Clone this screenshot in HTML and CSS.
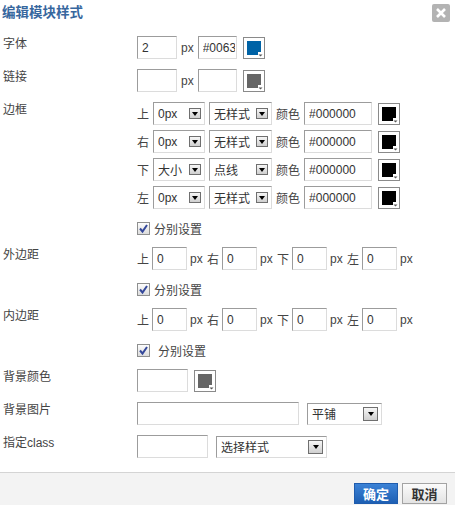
FILE: index.html
```html
<!DOCTYPE html>
<html>
<head>
  <title>编辑模块样式</title>
  <meta charset="UTF-8">
  <link rel="stylesheet" href="styles.css">
</head>
<body>
  <div class="dialog">
    <div class="dlg-head">
      <span class="dlg-title">编辑模块样式</span>
      <span class="dlg-close"><svg width="10" height="10" viewBox="0 0 10 10"><path d="M1 1L9 9M9 1L1 9" stroke="#fff" stroke-width="2.6"/></svg></span>
    </div>

    <div class="dlg-body">
      <div class="form-row">
        <label class="form-label">字体</label>
        <div class="form-fields">
          <div class="line">
            <input type="text" class="ipt ipt-num" value="2">
            <span class="unit">px</span>
            <input type="text" class="ipt ipt-code" value="#0063a6">
            <span class="swatch"><svg width="20" height="20" viewBox="0 0 20 20"><path d="M3 3H17V14H14V17H3Z" fill="#0063a6"/><path d="M14.5 16.5h4l-2 2z" fill="#555"/></svg></span>
          </div>
        </div>
      </div>

      <div class="form-row">
        <label class="form-label">链接</label>
        <div class="form-fields">
          <div class="line">
            <input type="text" class="ipt ipt-num" value="">
            <span class="unit">px</span>
            <input type="text" class="ipt ipt-code" value="">
            <span class="swatch"><svg width="20" height="20" viewBox="0 0 20 20"><path d="M3 3H17V14H14V17H3Z" fill="#666"/><path d="M14.5 16.5h4l-2 2z" fill="#555"/></svg></span>
          </div>
        </div>
      </div>

      <div class="form-row">
        <label class="form-label">边框</label>
        <div class="form-fields">
          <div class="line">
            <span class="side">上</span>
            <div class="sel sel-size"><span>0px</span><span class="sel-btn"></span></div>
            <div class="sel sel-style"><span>无样式</span><span class="sel-btn"></span></div>
            <span class="side">颜色</span>
            <input type="text" class="ipt ipt-color" value="#000000">
            <span class="swatch"><svg width="20" height="20" viewBox="0 0 20 20"><path d="M3 3H17V14H14V17H3Z" fill="#000"/><path d="M14.5 16.5h4l-2 2z" fill="#555"/></svg></span>
          </div>
          <div class="line">
            <span class="side">右</span>
            <div class="sel sel-size"><span>0px</span><span class="sel-btn"></span></div>
            <div class="sel sel-style"><span>无样式</span><span class="sel-btn"></span></div>
            <span class="side">颜色</span>
            <input type="text" class="ipt ipt-color" value="#000000">
            <span class="swatch"><svg width="20" height="20" viewBox="0 0 20 20"><path d="M3 3H17V14H14V17H3Z" fill="#000"/><path d="M14.5 16.5h4l-2 2z" fill="#555"/></svg></span>
          </div>
          <div class="line">
            <span class="side">下</span>
            <div class="sel sel-size"><span>大小</span><span class="sel-btn"></span></div>
            <div class="sel sel-style"><span>点线</span><span class="sel-btn"></span></div>
            <span class="side">颜色</span>
            <input type="text" class="ipt ipt-color" value="#000000">
            <span class="swatch"><svg width="20" height="20" viewBox="0 0 20 20"><path d="M3 3H17V14H14V17H3Z" fill="#000"/><path d="M14.5 16.5h4l-2 2z" fill="#555"/></svg></span>
          </div>
          <div class="line">
            <span class="side">左</span>
            <div class="sel sel-size"><span>0px</span><span class="sel-btn"></span></div>
            <div class="sel sel-style"><span>无样式</span><span class="sel-btn"></span></div>
            <span class="side">颜色</span>
            <input type="text" class="ipt ipt-color" value="#000000">
            <span class="swatch"><svg width="20" height="20" viewBox="0 0 20 20"><path d="M3 3H17V14H14V17H3Z" fill="#000"/><path d="M14.5 16.5h4l-2 2z" fill="#555"/></svg></span>
          </div>
        </div>
      </div>

      <div class="form-row check-row">
        <span class="form-label"></span>
        <label class="check"><span class="ck"><svg width="11" height="11" viewBox="0 0 11 11"><path d="M2 5.5L4.5 8.5L9 2" fill="none" stroke="#34489a" stroke-width="2"/></svg></span>分别设置</label>
      </div>

      <div class="form-row">
        <label class="form-label">外边距</label>
        <div class="form-fields">
          <div class="line spacing">
            <span class="side">上</span><input type="text" class="ipt ipt-box" value="0"><span class="unit">px</span>
            <span class="side">右</span><input type="text" class="ipt ipt-box" value="0"><span class="unit">px</span>
            <span class="side">下</span><input type="text" class="ipt ipt-box" value="0"><span class="unit">px</span>
            <span class="side">左</span><input type="text" class="ipt ipt-box" value="0"><span class="unit">px</span>
          </div>
        </div>
      </div>

      <div class="form-row check-row">
        <span class="form-label"></span>
        <label class="check"><span class="ck"><svg width="11" height="11" viewBox="0 0 11 11"><path d="M2 5.5L4.5 8.5L9 2" fill="none" stroke="#34489a" stroke-width="2"/></svg></span>分别设置</label>
      </div>

      <div class="form-row">
        <label class="form-label">内边距</label>
        <div class="form-fields">
          <div class="line spacing">
            <span class="side">上</span><input type="text" class="ipt ipt-box" value="0"><span class="unit">px</span>
            <span class="side">右</span><input type="text" class="ipt ipt-box" value="0"><span class="unit">px</span>
            <span class="side">下</span><input type="text" class="ipt ipt-box" value="0"><span class="unit">px</span>
            <span class="side">左</span><input type="text" class="ipt ipt-box" value="0"><span class="unit">px</span>
          </div>
        </div>
      </div>

      <div class="form-row check-row">
        <span class="form-label"></span>
        <label class="check check-wide"><span class="ck"><svg width="11" height="11" viewBox="0 0 11 11"><path d="M2 5.5L4.5 8.5L9 2" fill="none" stroke="#34489a" stroke-width="2"/></svg></span>分别设置</label>
      </div>

      <div class="form-row">
        <label class="form-label">背景颜色</label>
        <div class="form-fields">
          <div class="line">
            <input type="text" class="ipt ipt-bg" value="">
            <span class="swatch swatch-far"><svg width="20" height="20" viewBox="0 0 20 20"><path d="M3 3H17V14H14V17H3Z" fill="#666"/><path d="M14.5 16.5h4l-2 2z" fill="#555"/></svg></span>
          </div>
        </div>
      </div>

      <div class="form-row">
        <label class="form-label">背景图片</label>
        <div class="form-fields">
          <div class="line wide-gap">
            <input type="text" class="ipt ipt-url" value="">
            <div class="sel sel-repeat"><span>平铺</span><span class="sel-btn sel-btn-lg"></span></div>
          </div>
        </div>
      </div>

      <div class="form-row">
        <label class="form-label">指定class</label>
        <div class="form-fields">
          <div class="line wide-gap">
            <input type="text" class="ipt ipt-class" value="">
            <div class="sel sel-class"><span>选择样式</span><span class="sel-btn sel-btn-lg"></span></div>
          </div>
        </div>
      </div>
    </div>

    <div class="dlg-foot">
      <button class="btn btn-primary">确定</button>
      <button class="btn">取消</button>
    </div>
  </div>
</body>
</html>
```

FILE: styles.css
```css
html, body {
  margin: 0;
  padding: 0;
  background: #fff;
}
body {
  font-family: "Liberation Sans", "Noto Sans CJK SC", sans-serif;
  font-size: 12px;
  color: #444;
  overflow: hidden;
}
.dialog {
  width: 455px;
  height: 505px;
  display: flex;
  flex-direction: column;
}

/* header */
.dlg-head {
  height: 36px;
  display: flex;
  justify-content: space-between;
  align-items: flex-start;
  padding: 0 5px 0 2px;
  flex: none;
}
.dlg-title {
  font-size: 13.5px;
  font-weight: bold;
  line-height: 26px;
  color: #37679e;
}
.dlg-close {
  margin-top: 4px;
  width: 18px;
  height: 18px;
  background: #b3b3b3;
  border-radius: 2px;
  display: flex;
  align-items: center;
  justify-content: center;
}

/* form */
.dlg-body {
  display: flex;
  flex-direction: column;
  gap: 10px;
  padding-bottom: 14px;
  flex: 1;
}
.form-row {
  display: flex;
}
.form-label {
  width: 137px;
  padding-left: 3px;
  box-sizing: border-box;
  line-height: 17px;
  flex: none;
  color: #444;
}
.form-fields {
  display: flex;
  flex-direction: column;
  gap: 5px;
}
.line {
  display: flex;
  align-items: center;
  gap: 4px;
  height: 23px;
}
.line.spacing {
  gap: 3px;
}
.line.spacing .unit {
  width: 14px;
}
.line.wide-gap {
  gap: 8px;
}
.side, .unit {
  color: #444;
  white-space: nowrap;
}

.ipt {
  height: 23px;
  box-sizing: border-box;
  border: 1px solid;
  border-color: #9c9c9c #dcdcdc #dcdcdc #9c9c9c;
  padding: 0 1px 0 4px;
  margin: 0;
  font-family: "Liberation Sans", "Noto Sans CJK SC", sans-serif;
  font-size: 12px;
  color: #333;
  background: #fff;
  outline: none;
}
.ipt-num { width: 40px; }
.ipt-code { width: 39px; }
.ipt-color { width: 68px; }
.ipt-box { width: 35px; }
.ipt-bg { width: 51px; }
.ipt-url { width: 162px; }
.ipt-class { width: 71px; }

/* fake select box */
.sel {
  height: 23px;
  box-sizing: border-box;
  display: flex;
  align-items: center;
  justify-content: space-between;
  border: 1px solid;
  border-color: #9c9c9c #dcdcdc #dcdcdc #9c9c9c;
  padding: 0 3px 0 4px;
  background: #fff;
  color: #333;
}
.sel-size { width: 52px; }
.sel-style { width: 63px; }
.sel-repeat { width: 75px; height: 22px; }
.sel-class { width: 111px; height: 22px; }
.sel-btn {
  width: 12px;
  height: 11px;
  box-sizing: border-box;
  border: 1px solid #6f6f6f;
  background: linear-gradient(#f6f6f6, #cfcfcf);
  display: flex;
  align-items: center;
  justify-content: center;
}
.sel-btn::after {
  content: "";
  width: 0;
  height: 0;
  border-left: 3.5px solid transparent;
  border-right: 3.5px solid transparent;
  border-top: 4px solid #000;
}
.sel-btn-lg {
  width: 15px;
  height: 14px;
}

.swatch {
  width: 22px;
  height: 22px;
  box-sizing: border-box;
  border: 1px solid #8a8a8a;
  background: #fff;
  display: flex;
  margin-left: 2px;
}
.swatch-far {
  margin-left: 2px;
}
.line .swatch-far {
  margin-left: 2px;
}

/* checkbox rows */
.check-row {
  height: 18px;
  align-items: center;
}
.check {
  display: flex;
  align-items: center;
  color: #444;
}
.ck {
  width: 13px;
  height: 13px;
  box-sizing: border-box;
  border: 1px solid #8e8f8f;
  background: linear-gradient(#fdfdfd, #dcdcdc);
  display: flex;
  align-items: center;
  justify-content: center;
  margin-right: 4px;
}
.check-wide .ck {
  margin-right: 8px;
}

/* footer */
.dlg-foot {
  height: 33px;
  box-sizing: border-box;
  flex: none;
  border-top: 1px solid #d4d4d4;
  background: #f3f3f3;
  display: flex;
  justify-content: flex-end;
  align-items: flex-start;
  gap: 4px;
  padding: 10px 8px 0 0;
}
.btn {
  height: 21px;
  width: 45px;
  padding: 0;
  margin: 0;
  font-family: "Liberation Sans", "Noto Sans CJK SC", sans-serif;
  font-size: 13px;
  font-weight: bold;
  color: #333;
  border: 1px solid #a3a3a3;
  background: linear-gradient(#fbfbfb, #e3e3e3);
  cursor: pointer;
}
.btn-primary {
  width: 44px;
  color: #fff;
  border-color: #1f5cad;
  background: linear-gradient(#3b82d6, #1e5fb3);
}
```
